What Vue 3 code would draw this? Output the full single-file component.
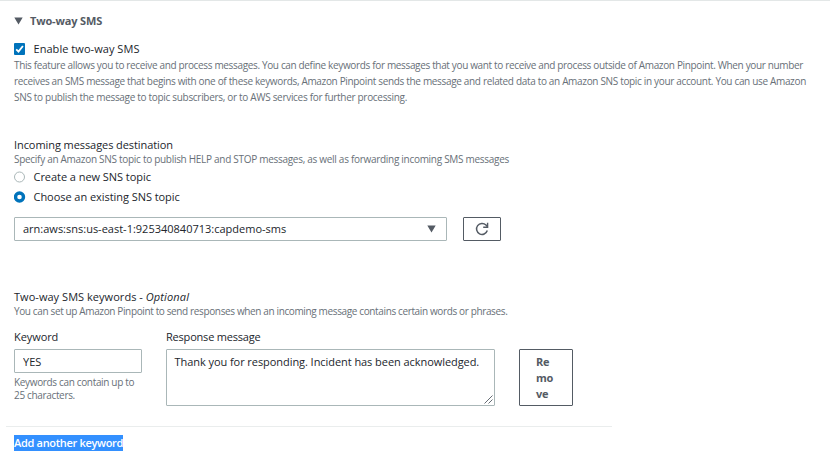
<script setup>
import { ref } from 'vue'

const enabled = ref(true)
const destination = ref('existing')
const keyword = ref('YES')
const response = ref('Thank you for responding. Incident has been acknowledged.')
</script>

<template>
  <main class="panel">
    <header class="heading">
      <svg class="caret" viewBox="0 0 9 8"><path d="M0.3 0.5H8.7L4.5 7.6Z" /></svg>
      <h2 class="title">Two-way SMS</h2>
    </header>

    <label class="option enable">
      <input v-model="enabled" class="native" type="checkbox" />
      <svg class="control" viewBox="0 0 12 12">
        <rect width="11" height="12" rx="1" fill="#0073bb" />
        <path v-if="enabled" d="M2.2 6.3L4.5 8.6L8.9 3" fill="none" stroke="#fff" stroke-width="1.8" />
      </svg>
      <span class="enable-text">Enable two-way SMS</span>
    </label>
    <p class="description">
      <span class="line first">This feature allows you to receive and process messages. You can define keywords for messages that you want to receive and process outside of Amazon Pinpoint. When your number</span>
      <span class="line second">receives an SMS message that begins with one of these keywords, Amazon Pinpoint sends the message and related data to an Amazon SNS topic in your account. You can use Amazon</span>
      <span class="line third">SNS to publish the message to topic subscribers, or to AWS services for further processing.</span>
    </p>

    <section class="destination">
      <div class="label incoming">Incoming messages destination</div>
      <p class="hint specify">Specify an Amazon SNS topic to publish HELP and STOP messages, as well as forwarding incoming SMS messages</p>
      <label class="option create">
        <input v-model="destination" class="native" type="radio" value="new" />
        <svg class="control" viewBox="0 0 12 12">
          <circle v-if="destination === 'new'" class="dot" cx="5.5" cy="6" r="4" />
          <circle v-else class="ring" cx="5.5" cy="6" r="5" />
        </svg>
        <span>Create a new SNS topic</span>
      </label>
      <label class="option">
        <input v-model="destination" class="native" type="radio" value="existing" />
        <svg class="control" viewBox="0 0 12 12">
          <circle v-if="destination === 'existing'" class="dot" cx="5.5" cy="6" r="4" />
          <circle v-else class="ring" cx="5.5" cy="6" r="5" />
        </svg>
        <span>Choose an existing SNS topic</span>
      </label>
      <div class="topic">
        <div class="select">
          <span>arn:aws:sns:us-east-1:925340840713:capdemo-sms</span>
          <svg class="caret" viewBox="0 0 9 8"><path d="M0.3 0.5H8.7L4.5 7.6Z" /></svg>
        </div>
        <button class="refresh" type="button">
          <svg viewBox="0 0 14 14">
            <path d="M12.3 8.6A5.5 5.5 0 1 1 11 3.1L12.3 4.6" fill="none" stroke="#545b64" stroke-width="1.5" />
            <path d="M12.6 0.8V5.2H8.2" fill="none" stroke="#545b64" stroke-width="1.4" />
          </svg>
        </button>
      </div>
    </section>

    <section class="keywords">
      <div class="label kw-title">Two-way SMS keywords - <em>Optional</em></div>
      <p class="hint kw-hint">You can set up Amazon Pinpoint to send responses when an incoming message contains certain words or phrases.</p>
      <div class="fields">
        <div class="keyword-field">
          <div class="label kw-label">Keyword</div>
          <input v-model="keyword" class="input" type="text" />
          <p class="help">Keywords can contain up to<br />25 characters.</p>
        </div>
        <div class="response-field">
          <div class="label response-label">Response message</div>
          <div class="area">
            <textarea v-model="response" class="textarea"></textarea>
            <svg class="grip" viewBox="0 0 9 9"><path d="M0.5 8.5L8.5 0.5M4.5 8.5L8.5 4.5" /></svg>
          </div>
        </div>
        <button class="remove" type="button">Re<br />mo<br />ve</button>
      </div>
    </section>

    <footer class="footer"><a class="add">Add another keyword</a></footer>
  </main>
</template>

<style>
body { background: #fff; overflow: hidden; }
</style>

<style scoped>
* { box-sizing: border-box; }
.panel {
  height: 453px;
  padding: 12px 0 0 14px;
  border-top: 1px solid #e3e7e7;
  font: 11px/16px "Open Sans", "Noto Sans", sans-serif;
  color: #22262c;
}
p, h2 { margin: 0; }
.heading { display: flex; align-items: center; gap: 7px; height: 16px; }
.caret { width: 9px; height: 8px; fill: #545b64; }
.title { font-size: 11px; line-height: 16px; font-weight: 700; letter-spacing: -0.16px; color: #545b64; }
.option { display: flex; align-items: center; height: 16px; letter-spacing: -0.05px; white-space: nowrap; }
.native { position: absolute; opacity: 0; pointer-events: none; }
.control { width: 12px; height: 12px; margin-right: 7.5px; flex: none; }
.enable { margin-top: 12px; }
.enable-text { letter-spacing: 0.05px; }
.dot { fill: #fff; stroke: #0073bb; stroke-width: 3.4; }
.ring { fill: #fff; stroke: #aab7b8; stroke-width: 1; }
.description { margin-top: -1px; padding-top: 0.5px; font-size: 10px; color: #687078; }
.line { display: block; white-space: nowrap; }
.first { letter-spacing: -0.347px; }
.second { letter-spacing: -0.332px; }
.third { letter-spacing: -0.31px; }
.destination { margin-top: 32.5px; }
.label { height: 16px; white-space: nowrap; }
.incoming { letter-spacing: -0.076px; }
.hint { height: 16px; margin-top: -3px; padding-top: 0.5px; font-size: 10px; color: #687078; white-space: nowrap; }
.specify { letter-spacing: -0.292px; }
.create { margin: 3px 0 4px; }
.topic { display: flex; gap: 16px; margin-top: 12px; }
.select {
  display: flex; align-items: center; justify-content: space-between;
  width: 433px; height: 24px; padding: 0 10px 0 8px;
  border: 1px solid #aab7b8; border-radius: 1px;
}
.refresh {
  display: flex; align-items: center; justify-content: center;
  width: 38px; height: 24px; padding: 0;
  border: 1px solid #545b64; border-radius: 1px; background: #fff;
}
.refresh svg { width: 14px; height: 14px; }
.keywords { margin-top: 48px; }
.kw-title { letter-spacing: 0.04px; }
.kw-title em { letter-spacing: 0.13px; }
.kw-hint { letter-spacing: -0.367px; }
.fields { display: flex; height: 77px; margin-top: 11px; }
.keyword-field { width: 128px; margin-right: 24px; }
.kw-label { letter-spacing: -0.08px; }
.input {
  display: block; width: 128px; height: 24px; margin-top: 4px; padding: 0 8px;
  border: 1px solid #aab7b8; border-radius: 1px;
  font: inherit; letter-spacing: 0; color: inherit;
}
.help { margin-top: 3px; font-size: 10px; line-height: 12.5px; letter-spacing: -0.34px; color: #687078; white-space: nowrap; }
.response-field { width: 329px; margin-right: 24px; }
.response-label { letter-spacing: -0.2px; }
.area { position: relative; height: 57px; margin-top: 4px; }
.textarea {
  display: block; width: 329px; height: 57px; padding: 4px 7.5px; resize: none; overflow: hidden;
  border: 1px solid #aab7b8; border-radius: 1px;
  font: inherit; letter-spacing: -0.06px; color: inherit;
}
.grip { position: absolute; right: 2px; bottom: 2px; width: 9px; height: 9px; fill: none; stroke: #545b64; stroke-width: 0.9; }
.remove {
  width: 54px; height: 57px; margin-top: 20px; padding: 1px 0 0 16px;
  border: 1px solid #545b64; border-radius: 1px; background: #fff;
  font: 700 11px/16px "Open Sans", "Noto Sans", sans-serif; letter-spacing: -0.2px; color: #545b64; text-align: left;
}
.footer { display: flex; width: 606px; margin: 20px 0 0 -8px; padding: 8px 0 0 8px; border-top: 1px solid #eaeded; }
.add { width: 109px; height: 16px; background: #3390ff; color: #fff; font-weight: 600; letter-spacing: -0.316px; white-space: nowrap; }
</style>
